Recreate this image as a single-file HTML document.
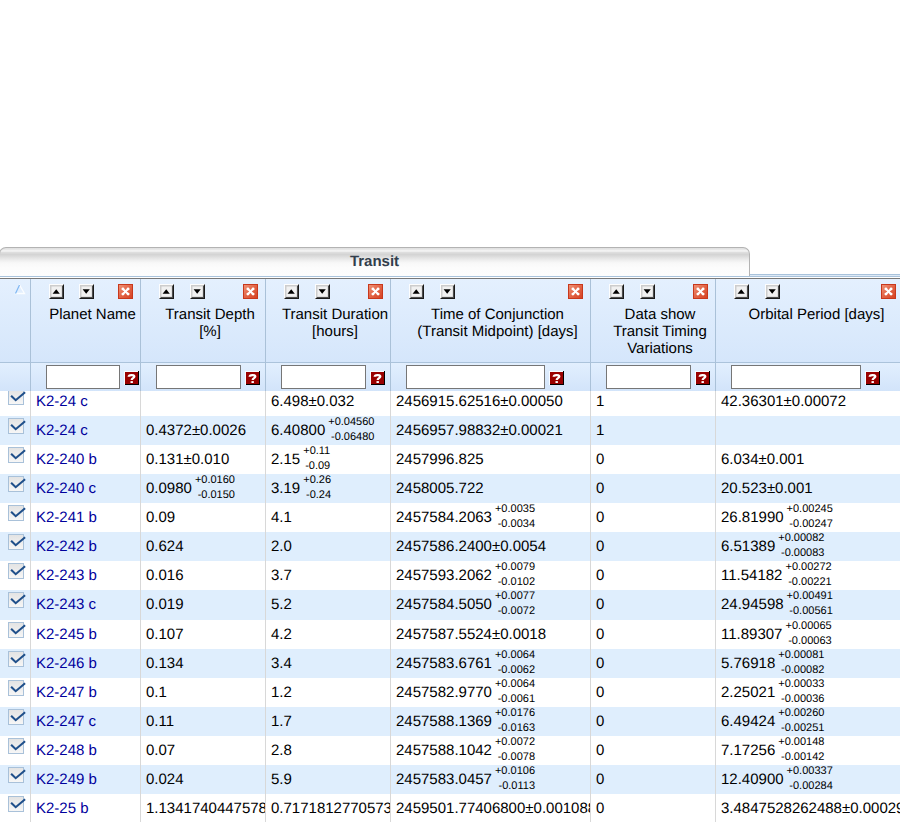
<!DOCTYPE html>
<html><head><meta charset="utf-8"><style>
html,body{margin:0;padding:0;background:#fff;width:900px;height:822px;overflow:hidden;font-family:"Liberation Sans",sans-serif;text-rendering:geometricPrecision;}
.abs{position:absolute;}
#strip{position:absolute;left:0;top:274px;width:900px;height:1px;border-top:1px solid #a9c3dc;border-bottom:1px solid #a9c3dc;background:#dde9f6;}
#tab{position:absolute;left:-1px;top:247px;width:749px;height:28px;border:1px solid #b3b3b3;border-bottom:none;border-radius:7px 7px 0 0;
 background:linear-gradient(#dfdfdf 0px,#e7e7e7 1.5px,#f3f3f3 2.6px,#f0f0f0 3.4px,#dedede 4.5px,#d4d4d4 6.5px,#dadada 8px,#e4e4e4 10px,#efefef 12.5px,#f8f8f8 15px,#fcfcfc 20px,#fdfdfd 28px);
 font-weight:bold;font-size:15px;color:#323e4c;text-align:center;line-height:28px;}
#tline{position:absolute;left:0;top:278px;width:900px;height:1px;background:#787878;}
#hdr{position:absolute;left:0;top:279px;width:900px;height:83px;background:linear-gradient(#e4f0fe,#d5e6fb);}
#hb{position:absolute;left:0;top:362px;width:900px;height:1px;background:#abc3db;}
#flt{position:absolute;left:0;top:363px;width:900px;height:28px;background:linear-gradient(#e2effe,#d2e4fa);}
.hsep{position:absolute;top:279px;width:1px;height:112px;background:#aac1d8;}
.bsep{position:absolute;top:0;width:1px;height:431px;background:#d8d8d8;}
.hc{position:absolute;top:279px;height:83px;}
.ht{position:absolute;left:14px;right:0;top:27px;text-align:center;font-size:15px;line-height:17px;color:#000;}
.btn{position:absolute;top:284px;}
.inp{position:absolute;top:365px;height:24px;box-sizing:border-box;border:1px solid #767676;background:#fff;}
.row{position:absolute;left:0;width:900px;height:29px;}
.alt{background:#dfeefd;}
.cell{position:absolute;top:0;height:29px;overflow:hidden;white-space:nowrap;font-size:15px;color:#000;}
.cell .t{position:absolute;left:5px;top:6px;line-height:17px;}
.lnk{color:#00009c;}
.pm{position:absolute;left:100%;top:-7px;margin-left:3px;font-size:11px;line-height:15px;text-align:right;}
.sp,.sb{display:block;}
#body{position:absolute;left:0;top:391px;width:900px;height:431px;overflow:hidden;}
</style></head><body>

<svg width="0" height="0" style="position:absolute;left:0;top:0"><defs><linearGradient id="rg" x1="0" y1="0" x2="1" y2="1"><stop offset="0" stop-color="#f0967a"/><stop offset="0.5" stop-color="#e26446"/><stop offset="1" stop-color="#d5401f"/></linearGradient><linearGradient id="cg" x1="0" y1="0" x2="0" y2="1"><stop offset="0" stop-color="#e3e3e3"/><stop offset="1" stop-color="#f7f7f7"/></linearGradient></defs></svg>
<div id="strip"></div>
<div id="tab">Transit</div>
<div id="tline"></div><div id="hdr"></div><div id="hb"></div><div id="flt"></div>
<div id="body">
<div class="row" style="top:-4px;height:29px">
<svg style="position:absolute;left:8px;top:2px" width="20" height="17" viewBox="0 0 20 17"><rect x="0.5" y="0.5" width="15" height="15" fill="url(#cg)" stroke="#a9c1d9"/><path d="M3.1 6.8 L7.7 11.2 L17.1 3.3" stroke="#1f4f8a" stroke-width="2.1" fill="none" stroke-linejoin="miter"/></svg>
<div class="cell" style="left:31px;width:109px"><span class="t"><span class="lnk">K2-24 c</span></span></div>
<div class="cell" style="left:141px;width:124px"><span class="t"></span></div>
<div class="cell" style="left:266px;width:124px"><span class="t">6.498±0.032</span></div>
<div class="cell" style="left:391px;width:199px"><span class="t">2456915.62516±0.00050</span></div>
<div class="cell" style="left:591px;width:124px"><span class="t">1</span></div>
<div class="cell" style="left:716px;width:187px"><span class="t">42.36301±0.00072</span></div>
</div>
<div class="row alt" style="top:25px;height:29px">
<svg style="position:absolute;left:8px;top:2px" width="20" height="17" viewBox="0 0 20 17"><rect x="0.5" y="0.5" width="15" height="15" fill="url(#cg)" stroke="#a9c1d9"/><path d="M3.1 6.8 L7.7 11.2 L17.1 3.3" stroke="#1f4f8a" stroke-width="2.1" fill="none" stroke-linejoin="miter"/></svg>
<div class="cell" style="left:31px;width:109px"><span class="t"><span class="lnk">K2-24 c</span></span></div>
<div class="cell" style="left:141px;width:124px"><span class="t">0.4372±0.0026</span></div>
<div class="cell" style="left:266px;width:124px"><span class="t">6.40800<span class="pm"><span class="sp">+0.04560</span><span class="sb">-0.06480</span></span></span></div>
<div class="cell" style="left:391px;width:199px"><span class="t">2456957.98832±0.00021</span></div>
<div class="cell" style="left:591px;width:124px"><span class="t">1</span></div>
<div class="cell" style="left:716px;width:187px"><span class="t"></span></div>
</div>
<div class="row" style="top:54px;height:29px">
<svg style="position:absolute;left:8px;top:2px" width="20" height="17" viewBox="0 0 20 17"><rect x="0.5" y="0.5" width="15" height="15" fill="url(#cg)" stroke="#a9c1d9"/><path d="M3.1 6.8 L7.7 11.2 L17.1 3.3" stroke="#1f4f8a" stroke-width="2.1" fill="none" stroke-linejoin="miter"/></svg>
<div class="cell" style="left:31px;width:109px"><span class="t"><span class="lnk">K2-240 b</span></span></div>
<div class="cell" style="left:141px;width:124px"><span class="t">0.131±0.010</span></div>
<div class="cell" style="left:266px;width:124px"><span class="t">2.15<span class="pm"><span class="sp">+0.11</span><span class="sb">-0.09</span></span></span></div>
<div class="cell" style="left:391px;width:199px"><span class="t">2457996.825</span></div>
<div class="cell" style="left:591px;width:124px"><span class="t">0</span></div>
<div class="cell" style="left:716px;width:187px"><span class="t">6.034±0.001</span></div>
</div>
<div class="row alt" style="top:83px;height:29px">
<svg style="position:absolute;left:8px;top:2px" width="20" height="17" viewBox="0 0 20 17"><rect x="0.5" y="0.5" width="15" height="15" fill="url(#cg)" stroke="#a9c1d9"/><path d="M3.1 6.8 L7.7 11.2 L17.1 3.3" stroke="#1f4f8a" stroke-width="2.1" fill="none" stroke-linejoin="miter"/></svg>
<div class="cell" style="left:31px;width:109px"><span class="t"><span class="lnk">K2-240 c</span></span></div>
<div class="cell" style="left:141px;width:124px"><span class="t">0.0980<span class="pm"><span class="sp">+0.0160</span><span class="sb">-0.0150</span></span></span></div>
<div class="cell" style="left:266px;width:124px"><span class="t">3.19<span class="pm"><span class="sp">+0.26</span><span class="sb">-0.24</span></span></span></div>
<div class="cell" style="left:391px;width:199px"><span class="t">2458005.722</span></div>
<div class="cell" style="left:591px;width:124px"><span class="t">0</span></div>
<div class="cell" style="left:716px;width:187px"><span class="t">20.523±0.001</span></div>
</div>
<div class="row" style="top:112px;height:29px">
<svg style="position:absolute;left:8px;top:2px" width="20" height="17" viewBox="0 0 20 17"><rect x="0.5" y="0.5" width="15" height="15" fill="url(#cg)" stroke="#a9c1d9"/><path d="M3.1 6.8 L7.7 11.2 L17.1 3.3" stroke="#1f4f8a" stroke-width="2.1" fill="none" stroke-linejoin="miter"/></svg>
<div class="cell" style="left:31px;width:109px"><span class="t"><span class="lnk">K2-241 b</span></span></div>
<div class="cell" style="left:141px;width:124px"><span class="t">0.09</span></div>
<div class="cell" style="left:266px;width:124px"><span class="t">4.1</span></div>
<div class="cell" style="left:391px;width:199px"><span class="t">2457584.2063<span class="pm"><span class="sp">+0.0035</span><span class="sb">-0.0034</span></span></span></div>
<div class="cell" style="left:591px;width:124px"><span class="t">0</span></div>
<div class="cell" style="left:716px;width:187px"><span class="t">26.81990<span class="pm"><span class="sp">+0.00245</span><span class="sb">-0.00247</span></span></span></div>
</div>
<div class="row alt" style="top:141px;height:29px">
<svg style="position:absolute;left:8px;top:2px" width="20" height="17" viewBox="0 0 20 17"><rect x="0.5" y="0.5" width="15" height="15" fill="url(#cg)" stroke="#a9c1d9"/><path d="M3.1 6.8 L7.7 11.2 L17.1 3.3" stroke="#1f4f8a" stroke-width="2.1" fill="none" stroke-linejoin="miter"/></svg>
<div class="cell" style="left:31px;width:109px"><span class="t"><span class="lnk">K2-242 b</span></span></div>
<div class="cell" style="left:141px;width:124px"><span class="t">0.624</span></div>
<div class="cell" style="left:266px;width:124px"><span class="t">2.0</span></div>
<div class="cell" style="left:391px;width:199px"><span class="t">2457586.2400±0.0054</span></div>
<div class="cell" style="left:591px;width:124px"><span class="t">0</span></div>
<div class="cell" style="left:716px;width:187px"><span class="t">6.51389<span class="pm"><span class="sp">+0.00082</span><span class="sb">-0.00083</span></span></span></div>
</div>
<div class="row" style="top:170px;height:29px">
<svg style="position:absolute;left:8px;top:2px" width="20" height="17" viewBox="0 0 20 17"><rect x="0.5" y="0.5" width="15" height="15" fill="url(#cg)" stroke="#a9c1d9"/><path d="M3.1 6.8 L7.7 11.2 L17.1 3.3" stroke="#1f4f8a" stroke-width="2.1" fill="none" stroke-linejoin="miter"/></svg>
<div class="cell" style="left:31px;width:109px"><span class="t"><span class="lnk">K2-243 b</span></span></div>
<div class="cell" style="left:141px;width:124px"><span class="t">0.016</span></div>
<div class="cell" style="left:266px;width:124px"><span class="t">3.7</span></div>
<div class="cell" style="left:391px;width:199px"><span class="t">2457593.2062<span class="pm"><span class="sp">+0.0079</span><span class="sb">-0.0102</span></span></span></div>
<div class="cell" style="left:591px;width:124px"><span class="t">0</span></div>
<div class="cell" style="left:716px;width:187px"><span class="t">11.54182<span class="pm"><span class="sp">+0.00272</span><span class="sb">-0.00221</span></span></span></div>
</div>
<div class="row alt" style="top:199px;height:30px">
<svg style="position:absolute;left:8px;top:2px" width="20" height="17" viewBox="0 0 20 17"><rect x="0.5" y="0.5" width="15" height="15" fill="url(#cg)" stroke="#a9c1d9"/><path d="M3.1 6.8 L7.7 11.2 L17.1 3.3" stroke="#1f4f8a" stroke-width="2.1" fill="none" stroke-linejoin="miter"/></svg>
<div class="cell" style="left:31px;width:109px"><span class="t"><span class="lnk">K2-243 c</span></span></div>
<div class="cell" style="left:141px;width:124px"><span class="t">0.019</span></div>
<div class="cell" style="left:266px;width:124px"><span class="t">5.2</span></div>
<div class="cell" style="left:391px;width:199px"><span class="t">2457584.5050<span class="pm"><span class="sp">+0.0077</span><span class="sb">-0.0072</span></span></span></div>
<div class="cell" style="left:591px;width:124px"><span class="t">0</span></div>
<div class="cell" style="left:716px;width:187px"><span class="t">24.94598<span class="pm"><span class="sp">+0.00491</span><span class="sb">-0.00561</span></span></span></div>
</div>
<div class="row" style="top:229px;height:29px">
<svg style="position:absolute;left:8px;top:2px" width="20" height="17" viewBox="0 0 20 17"><rect x="0.5" y="0.5" width="15" height="15" fill="url(#cg)" stroke="#a9c1d9"/><path d="M3.1 6.8 L7.7 11.2 L17.1 3.3" stroke="#1f4f8a" stroke-width="2.1" fill="none" stroke-linejoin="miter"/></svg>
<div class="cell" style="left:31px;width:109px"><span class="t"><span class="lnk">K2-245 b</span></span></div>
<div class="cell" style="left:141px;width:124px"><span class="t">0.107</span></div>
<div class="cell" style="left:266px;width:124px"><span class="t">4.2</span></div>
<div class="cell" style="left:391px;width:199px"><span class="t">2457587.5524±0.0018</span></div>
<div class="cell" style="left:591px;width:124px"><span class="t">0</span></div>
<div class="cell" style="left:716px;width:187px"><span class="t">11.89307<span class="pm"><span class="sp">+0.00065</span><span class="sb">-0.00063</span></span></span></div>
</div>
<div class="row alt" style="top:258px;height:29px">
<svg style="position:absolute;left:8px;top:2px" width="20" height="17" viewBox="0 0 20 17"><rect x="0.5" y="0.5" width="15" height="15" fill="url(#cg)" stroke="#a9c1d9"/><path d="M3.1 6.8 L7.7 11.2 L17.1 3.3" stroke="#1f4f8a" stroke-width="2.1" fill="none" stroke-linejoin="miter"/></svg>
<div class="cell" style="left:31px;width:109px"><span class="t"><span class="lnk">K2-246 b</span></span></div>
<div class="cell" style="left:141px;width:124px"><span class="t">0.134</span></div>
<div class="cell" style="left:266px;width:124px"><span class="t">3.4</span></div>
<div class="cell" style="left:391px;width:199px"><span class="t">2457583.6761<span class="pm"><span class="sp">+0.0064</span><span class="sb">-0.0062</span></span></span></div>
<div class="cell" style="left:591px;width:124px"><span class="t">0</span></div>
<div class="cell" style="left:716px;width:187px"><span class="t">5.76918<span class="pm"><span class="sp">+0.00081</span><span class="sb">-0.00082</span></span></span></div>
</div>
<div class="row" style="top:287px;height:29px">
<svg style="position:absolute;left:8px;top:2px" width="20" height="17" viewBox="0 0 20 17"><rect x="0.5" y="0.5" width="15" height="15" fill="url(#cg)" stroke="#a9c1d9"/><path d="M3.1 6.8 L7.7 11.2 L17.1 3.3" stroke="#1f4f8a" stroke-width="2.1" fill="none" stroke-linejoin="miter"/></svg>
<div class="cell" style="left:31px;width:109px"><span class="t"><span class="lnk">K2-247 b</span></span></div>
<div class="cell" style="left:141px;width:124px"><span class="t">0.1</span></div>
<div class="cell" style="left:266px;width:124px"><span class="t">1.2</span></div>
<div class="cell" style="left:391px;width:199px"><span class="t">2457582.9770<span class="pm"><span class="sp">+0.0064</span><span class="sb">-0.0061</span></span></span></div>
<div class="cell" style="left:591px;width:124px"><span class="t">0</span></div>
<div class="cell" style="left:716px;width:187px"><span class="t">2.25021<span class="pm"><span class="sp">+0.00033</span><span class="sb">-0.00036</span></span></span></div>
</div>
<div class="row alt" style="top:316px;height:29px">
<svg style="position:absolute;left:8px;top:2px" width="20" height="17" viewBox="0 0 20 17"><rect x="0.5" y="0.5" width="15" height="15" fill="url(#cg)" stroke="#a9c1d9"/><path d="M3.1 6.8 L7.7 11.2 L17.1 3.3" stroke="#1f4f8a" stroke-width="2.1" fill="none" stroke-linejoin="miter"/></svg>
<div class="cell" style="left:31px;width:109px"><span class="t"><span class="lnk">K2-247 c</span></span></div>
<div class="cell" style="left:141px;width:124px"><span class="t">0.11</span></div>
<div class="cell" style="left:266px;width:124px"><span class="t">1.7</span></div>
<div class="cell" style="left:391px;width:199px"><span class="t">2457588.1369<span class="pm"><span class="sp">+0.0176</span><span class="sb">-0.0163</span></span></span></div>
<div class="cell" style="left:591px;width:124px"><span class="t">0</span></div>
<div class="cell" style="left:716px;width:187px"><span class="t">6.49424<span class="pm"><span class="sp">+0.00260</span><span class="sb">-0.00251</span></span></span></div>
</div>
<div class="row" style="top:345px;height:29px">
<svg style="position:absolute;left:8px;top:2px" width="20" height="17" viewBox="0 0 20 17"><rect x="0.5" y="0.5" width="15" height="15" fill="url(#cg)" stroke="#a9c1d9"/><path d="M3.1 6.8 L7.7 11.2 L17.1 3.3" stroke="#1f4f8a" stroke-width="2.1" fill="none" stroke-linejoin="miter"/></svg>
<div class="cell" style="left:31px;width:109px"><span class="t"><span class="lnk">K2-248 b</span></span></div>
<div class="cell" style="left:141px;width:124px"><span class="t">0.07</span></div>
<div class="cell" style="left:266px;width:124px"><span class="t">2.8</span></div>
<div class="cell" style="left:391px;width:199px"><span class="t">2457588.1042<span class="pm"><span class="sp">+0.0072</span><span class="sb">-0.0078</span></span></span></div>
<div class="cell" style="left:591px;width:124px"><span class="t">0</span></div>
<div class="cell" style="left:716px;width:187px"><span class="t">7.17256<span class="pm"><span class="sp">+0.00148</span><span class="sb">-0.00142</span></span></span></div>
</div>
<div class="row alt" style="top:374px;height:29px">
<svg style="position:absolute;left:8px;top:2px" width="20" height="17" viewBox="0 0 20 17"><rect x="0.5" y="0.5" width="15" height="15" fill="url(#cg)" stroke="#a9c1d9"/><path d="M3.1 6.8 L7.7 11.2 L17.1 3.3" stroke="#1f4f8a" stroke-width="2.1" fill="none" stroke-linejoin="miter"/></svg>
<div class="cell" style="left:31px;width:109px"><span class="t"><span class="lnk">K2-249 b</span></span></div>
<div class="cell" style="left:141px;width:124px"><span class="t">0.024</span></div>
<div class="cell" style="left:266px;width:124px"><span class="t">5.9</span></div>
<div class="cell" style="left:391px;width:199px"><span class="t">2457583.0457<span class="pm"><span class="sp">+0.0106</span><span class="sb">-0.0113</span></span></span></div>
<div class="cell" style="left:591px;width:124px"><span class="t">0</span></div>
<div class="cell" style="left:716px;width:187px"><span class="t">12.40900<span class="pm"><span class="sp">+0.00337</span><span class="sb">-0.00284</span></span></span></div>
</div>
<div class="row" style="top:403px;height:29px">
<svg style="position:absolute;left:8px;top:2px" width="20" height="17" viewBox="0 0 20 17"><rect x="0.5" y="0.5" width="15" height="15" fill="url(#cg)" stroke="#a9c1d9"/><path d="M3.1 6.8 L7.7 11.2 L17.1 3.3" stroke="#1f4f8a" stroke-width="2.1" fill="none" stroke-linejoin="miter"/></svg>
<div class="cell" style="left:31px;width:109px"><span class="t"><span class="lnk">K2-25 b</span></span></div>
<div class="cell" style="left:141px;width:124px"><span class="t">1.134174044757838</span></div>
<div class="cell" style="left:266px;width:124px"><span class="t">0.7171812770573014</span></div>
<div class="cell" style="left:391px;width:199px"><span class="t">2459501.77406800±0.001088</span></div>
<div class="cell" style="left:591px;width:124px"><span class="t">0</span></div>
<div class="cell" style="left:716px;width:187px"><span class="t">3.4847528262488±0.000299</span></div>
</div>
<div class="bsep" style="left:30px"></div>
<div class="bsep" style="left:140px"></div>
<div class="bsep" style="left:265px"></div>
<div class="bsep" style="left:390px"></div>
<div class="bsep" style="left:590px"></div>
<div class="bsep" style="left:715px"></div>
</div>
<div class="hsep" style="left:30px"></div>
<div class="hsep" style="left:140px"></div>
<div class="hsep" style="left:265px"></div>
<div class="hsep" style="left:390px"></div>
<div class="hsep" style="left:590px"></div>
<div class="hsep" style="left:715px"></div>
<svg class="abs" style="left:14px;top:284px" width="12" height="11"><path d="M1.5 9.5 L5.5 1 L10.5 9.5 Z" fill="none" stroke="#fbfdff" stroke-width="1.3"/><path d="M1.5 9.5 L5.5 1" stroke="#80b8f4" stroke-width="1.3"/></svg>
<div class="hc" style="left:31px;width:109px"><div class="ht">Planet Name</div></div>
<svg class="btn" style="left:49px" width="15" height="15" viewBox="0 0 15 15"><rect width="15" height="15" fill="#fdfdfd"/><polygon points="15,0 15,15 0,15 1,14 14,14 14,1" fill="#1a1a1a"/><polygon points="14,1 14,14 1,14 2,13 13,13 13,2" fill="#4d4d4d"/><rect x="1" y="1" width="12" height="12" fill="#cdcdcd"/><rect x="2.5" y="2.5" width="10" height="10" fill="#f1f1f1"/><polygon points="3.6,9.8 7.2,5.2 10.8,9.8" fill="#000"/></svg>
<svg class="btn" style="left:79px" width="15" height="15" viewBox="0 0 15 15"><rect width="15" height="15" fill="#fdfdfd"/><polygon points="15,0 15,15 0,15 1,14 14,14 14,1" fill="#1a1a1a"/><polygon points="14,1 14,14 1,14 2,13 13,13 13,2" fill="#4d4d4d"/><rect x="1" y="1" width="12" height="12" fill="#cdcdcd"/><rect x="2.5" y="2.5" width="10" height="10" fill="#f1f1f1"/><polygon points="3.6,5.2 7.2,9.8 10.8,5.2" fill="#000"/></svg>
<svg class="btn" style="left:118px" width="15" height="15" viewBox="0 0 15 15"><rect x="0.5" y="0.5" width="14" height="14" fill="url(#rg)" stroke="#c8381c" stroke-width="1"/><path d="M5 5 L10 10 M10 5 L5 10" stroke="#fff" stroke-width="2" stroke-linecap="round"/><circle cx="4.9" cy="4.9" r="1.45" fill="#fff"/><circle cx="10.1" cy="4.9" r="1.45" fill="#fff"/><circle cx="4.9" cy="10.1" r="1.45" fill="#fff"/><circle cx="10.1" cy="10.1" r="1.45" fill="#fff"/><circle cx="7.5" cy="7.5" r="1.5" fill="#fff"/></svg>
<div class="inp" style="left:46px;width:74px"></div>
<svg class="abs" style="left:124px;top:371px" width="16" height="16" viewBox="0 0 16 16"><rect x="0" y="0" width="14" height="14" fill="#f8fbff"/><rect x="14" y="0" width="1" height="14" fill="#000"/><rect x="1" y="13" width="14" height="1" fill="#000"/><rect x="1" y="1" width="13" height="12" fill="#990000"/><path d="M4.7 5.8 C4.7 3.6 10.3 3.4 10.3 5.6 C10.3 7.2 7.7 7.1 7.7 9" stroke="#fff" stroke-width="2.3" fill="none"/><rect x="6.5" y="10.1" width="2.4" height="1.9" fill="#fff"/></svg>
<div class="hc" style="left:141px;width:124px"><div class="ht">Transit Depth<br>[%]</div></div>
<svg class="btn" style="left:159px" width="15" height="15" viewBox="0 0 15 15"><rect width="15" height="15" fill="#fdfdfd"/><polygon points="15,0 15,15 0,15 1,14 14,14 14,1" fill="#1a1a1a"/><polygon points="14,1 14,14 1,14 2,13 13,13 13,2" fill="#4d4d4d"/><rect x="1" y="1" width="12" height="12" fill="#cdcdcd"/><rect x="2.5" y="2.5" width="10" height="10" fill="#f1f1f1"/><polygon points="3.6,9.8 7.2,5.2 10.8,9.8" fill="#000"/></svg>
<svg class="btn" style="left:190px" width="15" height="15" viewBox="0 0 15 15"><rect width="15" height="15" fill="#fdfdfd"/><polygon points="15,0 15,15 0,15 1,14 14,14 14,1" fill="#1a1a1a"/><polygon points="14,1 14,14 1,14 2,13 13,13 13,2" fill="#4d4d4d"/><rect x="1" y="1" width="12" height="12" fill="#cdcdcd"/><rect x="2.5" y="2.5" width="10" height="10" fill="#f1f1f1"/><polygon points="3.6,5.2 7.2,9.8 10.8,5.2" fill="#000"/></svg>
<svg class="btn" style="left:243px" width="15" height="15" viewBox="0 0 15 15"><rect x="0.5" y="0.5" width="14" height="14" fill="url(#rg)" stroke="#c8381c" stroke-width="1"/><path d="M5 5 L10 10 M10 5 L5 10" stroke="#fff" stroke-width="2" stroke-linecap="round"/><circle cx="4.9" cy="4.9" r="1.45" fill="#fff"/><circle cx="10.1" cy="4.9" r="1.45" fill="#fff"/><circle cx="4.9" cy="10.1" r="1.45" fill="#fff"/><circle cx="10.1" cy="10.1" r="1.45" fill="#fff"/><circle cx="7.5" cy="7.5" r="1.5" fill="#fff"/></svg>
<div class="inp" style="left:156px;width:85px"></div>
<svg class="abs" style="left:245px;top:371px" width="16" height="16" viewBox="0 0 16 16"><rect x="0" y="0" width="14" height="14" fill="#f8fbff"/><rect x="14" y="0" width="1" height="14" fill="#000"/><rect x="1" y="13" width="14" height="1" fill="#000"/><rect x="1" y="1" width="13" height="12" fill="#990000"/><path d="M4.7 5.8 C4.7 3.6 10.3 3.4 10.3 5.6 C10.3 7.2 7.7 7.1 7.7 9" stroke="#fff" stroke-width="2.3" fill="none"/><rect x="6.5" y="10.1" width="2.4" height="1.9" fill="#fff"/></svg>
<div class="hc" style="left:266px;width:124px"><div class="ht">Transit Duration<br>[hours]</div></div>
<svg class="btn" style="left:284px" width="15" height="15" viewBox="0 0 15 15"><rect width="15" height="15" fill="#fdfdfd"/><polygon points="15,0 15,15 0,15 1,14 14,14 14,1" fill="#1a1a1a"/><polygon points="14,1 14,14 1,14 2,13 13,13 13,2" fill="#4d4d4d"/><rect x="1" y="1" width="12" height="12" fill="#cdcdcd"/><rect x="2.5" y="2.5" width="10" height="10" fill="#f1f1f1"/><polygon points="3.6,9.8 7.2,5.2 10.8,9.8" fill="#000"/></svg>
<svg class="btn" style="left:315px" width="15" height="15" viewBox="0 0 15 15"><rect width="15" height="15" fill="#fdfdfd"/><polygon points="15,0 15,15 0,15 1,14 14,14 14,1" fill="#1a1a1a"/><polygon points="14,1 14,14 1,14 2,13 13,13 13,2" fill="#4d4d4d"/><rect x="1" y="1" width="12" height="12" fill="#cdcdcd"/><rect x="2.5" y="2.5" width="10" height="10" fill="#f1f1f1"/><polygon points="3.6,5.2 7.2,9.8 10.8,5.2" fill="#000"/></svg>
<svg class="btn" style="left:368px" width="15" height="15" viewBox="0 0 15 15"><rect x="0.5" y="0.5" width="14" height="14" fill="url(#rg)" stroke="#c8381c" stroke-width="1"/><path d="M5 5 L10 10 M10 5 L5 10" stroke="#fff" stroke-width="2" stroke-linecap="round"/><circle cx="4.9" cy="4.9" r="1.45" fill="#fff"/><circle cx="10.1" cy="4.9" r="1.45" fill="#fff"/><circle cx="4.9" cy="10.1" r="1.45" fill="#fff"/><circle cx="10.1" cy="10.1" r="1.45" fill="#fff"/><circle cx="7.5" cy="7.5" r="1.5" fill="#fff"/></svg>
<div class="inp" style="left:281px;width:85px"></div>
<svg class="abs" style="left:370px;top:371px" width="16" height="16" viewBox="0 0 16 16"><rect x="0" y="0" width="14" height="14" fill="#f8fbff"/><rect x="14" y="0" width="1" height="14" fill="#000"/><rect x="1" y="13" width="14" height="1" fill="#000"/><rect x="1" y="1" width="13" height="12" fill="#990000"/><path d="M4.7 5.8 C4.7 3.6 10.3 3.4 10.3 5.6 C10.3 7.2 7.7 7.1 7.7 9" stroke="#fff" stroke-width="2.3" fill="none"/><rect x="6.5" y="10.1" width="2.4" height="1.9" fill="#fff"/></svg>
<div class="hc" style="left:391px;width:199px"><div class="ht">Time of Conjunction<br>(Transit Midpoint) [days]</div></div>
<svg class="btn" style="left:409px" width="15" height="15" viewBox="0 0 15 15"><rect width="15" height="15" fill="#fdfdfd"/><polygon points="15,0 15,15 0,15 1,14 14,14 14,1" fill="#1a1a1a"/><polygon points="14,1 14,14 1,14 2,13 13,13 13,2" fill="#4d4d4d"/><rect x="1" y="1" width="12" height="12" fill="#cdcdcd"/><rect x="2.5" y="2.5" width="10" height="10" fill="#f1f1f1"/><polygon points="3.6,9.8 7.2,5.2 10.8,9.8" fill="#000"/></svg>
<svg class="btn" style="left:440px" width="15" height="15" viewBox="0 0 15 15"><rect width="15" height="15" fill="#fdfdfd"/><polygon points="15,0 15,15 0,15 1,14 14,14 14,1" fill="#1a1a1a"/><polygon points="14,1 14,14 1,14 2,13 13,13 13,2" fill="#4d4d4d"/><rect x="1" y="1" width="12" height="12" fill="#cdcdcd"/><rect x="2.5" y="2.5" width="10" height="10" fill="#f1f1f1"/><polygon points="3.6,5.2 7.2,9.8 10.8,5.2" fill="#000"/></svg>
<svg class="btn" style="left:568px" width="15" height="15" viewBox="0 0 15 15"><rect x="0.5" y="0.5" width="14" height="14" fill="url(#rg)" stroke="#c8381c" stroke-width="1"/><path d="M5 5 L10 10 M10 5 L5 10" stroke="#fff" stroke-width="2" stroke-linecap="round"/><circle cx="4.9" cy="4.9" r="1.45" fill="#fff"/><circle cx="10.1" cy="4.9" r="1.45" fill="#fff"/><circle cx="4.9" cy="10.1" r="1.45" fill="#fff"/><circle cx="10.1" cy="10.1" r="1.45" fill="#fff"/><circle cx="7.5" cy="7.5" r="1.5" fill="#fff"/></svg>
<div class="inp" style="left:406px;width:139px"></div>
<svg class="abs" style="left:549px;top:371px" width="16" height="16" viewBox="0 0 16 16"><rect x="0" y="0" width="14" height="14" fill="#f8fbff"/><rect x="14" y="0" width="1" height="14" fill="#000"/><rect x="1" y="13" width="14" height="1" fill="#000"/><rect x="1" y="1" width="13" height="12" fill="#990000"/><path d="M4.7 5.8 C4.7 3.6 10.3 3.4 10.3 5.6 C10.3 7.2 7.7 7.1 7.7 9" stroke="#fff" stroke-width="2.3" fill="none"/><rect x="6.5" y="10.1" width="2.4" height="1.9" fill="#fff"/></svg>
<div class="hc" style="left:591px;width:124px"><div class="ht">Data show<br>Transit Timing<br>Variations</div></div>
<svg class="btn" style="left:609px" width="15" height="15" viewBox="0 0 15 15"><rect width="15" height="15" fill="#fdfdfd"/><polygon points="15,0 15,15 0,15 1,14 14,14 14,1" fill="#1a1a1a"/><polygon points="14,1 14,14 1,14 2,13 13,13 13,2" fill="#4d4d4d"/><rect x="1" y="1" width="12" height="12" fill="#cdcdcd"/><rect x="2.5" y="2.5" width="10" height="10" fill="#f1f1f1"/><polygon points="3.6,9.8 7.2,5.2 10.8,9.8" fill="#000"/></svg>
<svg class="btn" style="left:640px" width="15" height="15" viewBox="0 0 15 15"><rect width="15" height="15" fill="#fdfdfd"/><polygon points="15,0 15,15 0,15 1,14 14,14 14,1" fill="#1a1a1a"/><polygon points="14,1 14,14 1,14 2,13 13,13 13,2" fill="#4d4d4d"/><rect x="1" y="1" width="12" height="12" fill="#cdcdcd"/><rect x="2.5" y="2.5" width="10" height="10" fill="#f1f1f1"/><polygon points="3.6,5.2 7.2,9.8 10.8,5.2" fill="#000"/></svg>
<svg class="btn" style="left:693px" width="15" height="15" viewBox="0 0 15 15"><rect x="0.5" y="0.5" width="14" height="14" fill="url(#rg)" stroke="#c8381c" stroke-width="1"/><path d="M5 5 L10 10 M10 5 L5 10" stroke="#fff" stroke-width="2" stroke-linecap="round"/><circle cx="4.9" cy="4.9" r="1.45" fill="#fff"/><circle cx="10.1" cy="4.9" r="1.45" fill="#fff"/><circle cx="4.9" cy="10.1" r="1.45" fill="#fff"/><circle cx="10.1" cy="10.1" r="1.45" fill="#fff"/><circle cx="7.5" cy="7.5" r="1.5" fill="#fff"/></svg>
<div class="inp" style="left:606px;width:85px"></div>
<svg class="abs" style="left:695px;top:371px" width="16" height="16" viewBox="0 0 16 16"><rect x="0" y="0" width="14" height="14" fill="#f8fbff"/><rect x="14" y="0" width="1" height="14" fill="#000"/><rect x="1" y="13" width="14" height="1" fill="#000"/><rect x="1" y="1" width="13" height="12" fill="#990000"/><path d="M4.7 5.8 C4.7 3.6 10.3 3.4 10.3 5.6 C10.3 7.2 7.7 7.1 7.7 9" stroke="#fff" stroke-width="2.3" fill="none"/><rect x="6.5" y="10.1" width="2.4" height="1.9" fill="#fff"/></svg>
<div class="hc" style="left:716px;width:187px"><div class="ht">Orbital Period [days]</div></div>
<svg class="btn" style="left:734px" width="15" height="15" viewBox="0 0 15 15"><rect width="15" height="15" fill="#fdfdfd"/><polygon points="15,0 15,15 0,15 1,14 14,14 14,1" fill="#1a1a1a"/><polygon points="14,1 14,14 1,14 2,13 13,13 13,2" fill="#4d4d4d"/><rect x="1" y="1" width="12" height="12" fill="#cdcdcd"/><rect x="2.5" y="2.5" width="10" height="10" fill="#f1f1f1"/><polygon points="3.6,9.8 7.2,5.2 10.8,9.8" fill="#000"/></svg>
<svg class="btn" style="left:765px" width="15" height="15" viewBox="0 0 15 15"><rect width="15" height="15" fill="#fdfdfd"/><polygon points="15,0 15,15 0,15 1,14 14,14 14,1" fill="#1a1a1a"/><polygon points="14,1 14,14 1,14 2,13 13,13 13,2" fill="#4d4d4d"/><rect x="1" y="1" width="12" height="12" fill="#cdcdcd"/><rect x="2.5" y="2.5" width="10" height="10" fill="#f1f1f1"/><polygon points="3.6,5.2 7.2,9.8 10.8,5.2" fill="#000"/></svg>
<svg class="btn" style="left:881px" width="15" height="15" viewBox="0 0 15 15"><rect x="0.5" y="0.5" width="14" height="14" fill="url(#rg)" stroke="#c8381c" stroke-width="1"/><path d="M5 5 L10 10 M10 5 L5 10" stroke="#fff" stroke-width="2" stroke-linecap="round"/><circle cx="4.9" cy="4.9" r="1.45" fill="#fff"/><circle cx="10.1" cy="4.9" r="1.45" fill="#fff"/><circle cx="4.9" cy="10.1" r="1.45" fill="#fff"/><circle cx="10.1" cy="10.1" r="1.45" fill="#fff"/><circle cx="7.5" cy="7.5" r="1.5" fill="#fff"/></svg>
<div class="inp" style="left:731px;width:130px"></div>
<svg class="abs" style="left:865px;top:371px" width="16" height="16" viewBox="0 0 16 16"><rect x="0" y="0" width="14" height="14" fill="#f8fbff"/><rect x="14" y="0" width="1" height="14" fill="#000"/><rect x="1" y="13" width="14" height="1" fill="#000"/><rect x="1" y="1" width="13" height="12" fill="#990000"/><path d="M4.7 5.8 C4.7 3.6 10.3 3.4 10.3 5.6 C10.3 7.2 7.7 7.1 7.7 9" stroke="#fff" stroke-width="2.3" fill="none"/><rect x="6.5" y="10.1" width="2.4" height="1.9" fill="#fff"/></svg>
</body></html>
